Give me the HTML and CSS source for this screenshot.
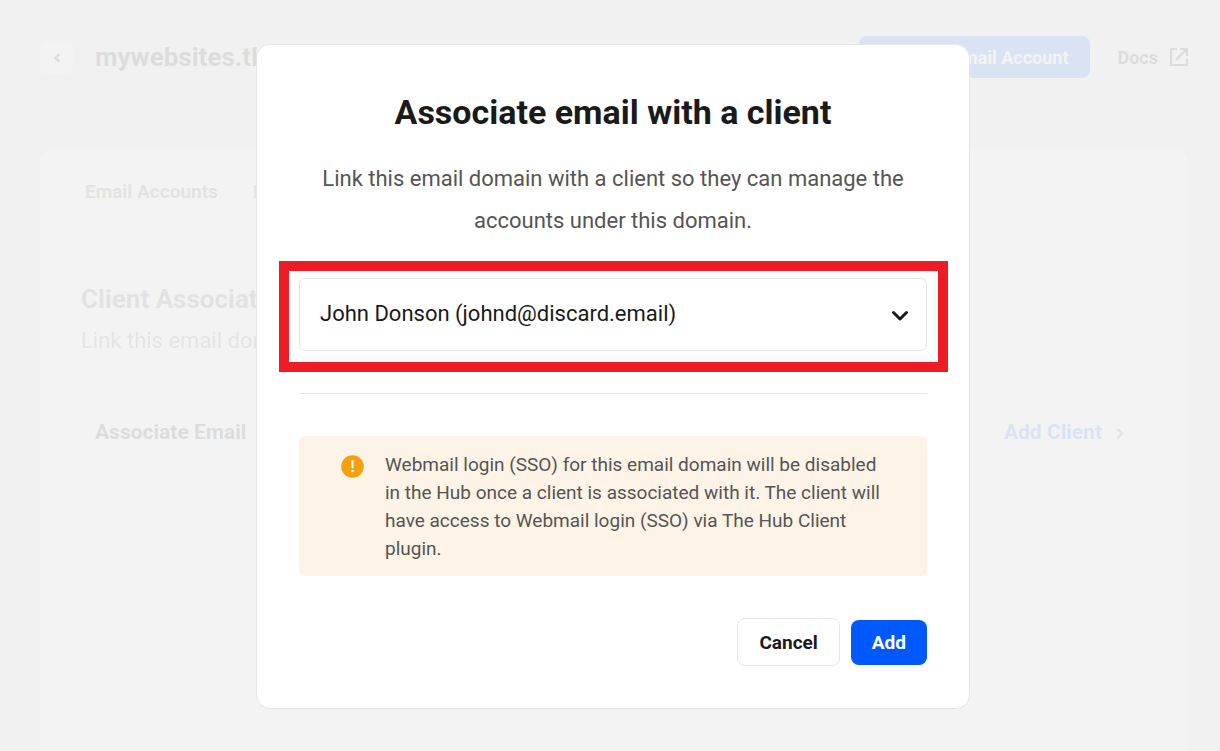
FILE: index.html
```html
<!DOCTYPE html>
<html lang="en">
<head>
<meta charset="utf-8">
<meta name="viewport" content="width=device-width, initial-scale=1">
<title>Associate email with a client</title>
<link rel="stylesheet" href="styles.css">
</head>
<body>
<div class="page">
  <header class="topbar">
    <button class="back" type="button" aria-label="Back">
      <svg width="8" height="10" viewBox="0 0 8 10" fill="none" stroke="currentColor" stroke-width="2.4"><path d="M6.500 1 2.500 5l4 4"/></svg>
    </button>
    <h1 class="domain">mywebsites.tk</h1>
    <button class="btn btn-top" type="button">Add New Email Account</button>
    <a class="docs" href="#docs">Docs
      <svg width="18" height="18" viewBox="0 0 18 18" fill="none" stroke="currentColor" stroke-width="2.2"><path d="M7 1H1v16h16v-6M10 1h7v7M16.500 1.500 6 12"/></svg>
    </a>
  </header>
  <main class="panel">
    <nav class="tabs">
      <a href="#accounts">Email Accounts</a>
      <a href="#filters">Filters</a>
    </nav>
    <h2 class="panel-title">Client Association</h2>
    <p class="panel-text">Link this email domain</p>
    <div class="panel-row">
      <span>Associate Email</span>
      <a class="add-client" href="#add-client">Add Client
        <svg width="8" height="14" viewBox="0 0 8 14" fill="none" stroke="currentColor" stroke-width="2.4"><path d="M1.500 4 6 8.500 1.500 13"/></svg>
      </a>
    </div>
  </main>
</div>

<div class="overlay">
  <form class="dialog" role="dialog" aria-modal="true" aria-labelledby="dialog-title">
    <h2 class="dialog-title" id="dialog-title">Associate email with a client</h2>
    <p class="dialog-text">Link this email domain with a client so they can manage the accounts under this domain.</p>
    <div class="highlight">
      <div class="select-box">
        <select class="select" aria-label="Client">
          <option>John Donson (johnd@discard.email)</option>
        </select>
        <svg class="select-arrow" width="18" height="12" viewBox="0 0 18 12" fill="none" stroke="currentColor" stroke-width="3" stroke-linecap="round" stroke-linejoin="round"><path d="M2.500 2.500 9 9l6.500-6.500"/></svg>
      </div>
    </div>
    <hr class="divider">
    <div class="notice">
      <svg class="notice-icon" width="23" height="23" viewBox="0 0 23 23"><circle cx="11.500" cy="11.500" r="11.200" fill="#f2a20d"/><path d="M10.400 5.200h2.200l-.3 8h-1.600z" fill="#fff"/><circle cx="11.500" cy="16" r="1.300" fill="#fff"/></svg>
      <p>Webmail login (SSO) for this email domain will be disabled in the Hub once a client is associated with it. The client will have access to Webmail login (SSO) via The Hub Client plugin.</p>
    </div>
    <div class="actions">
      <button class="btn btn-cancel" type="button">Cancel</button>
      <button class="btn btn-add" type="submit">Add</button>
    </div>
  </form>
</div>
</body>
</html>
```
FILE: styles.css
```css
* {
  box-sizing: border-box;
}

body {
  margin: 0;
  background: #e8e8e8;
  color: #1a1a1a;
  font-family: Roboto, "Liberation Sans", sans-serif;
}

h1, h2, p {
  margin: 0;
}

a {
  color: inherit;
  text-decoration: none;
}

button, select {
  font: inherit;
  color: inherit;
}

.page {
  display: flex;
  flex-direction: column;
  gap: 71px;
  min-height: 100vh;
  padding: 36px 32px 0 40px;
}

.topbar {
  display: flex;
  align-items: center;
  height: 42px;
}

.back {
  display: grid;
  place-items: center;
  width: 33px;
  height: 33px;
  padding: 2px 0 0;
  border: 0;
  border-radius: 8px;
  background: #fff;
}

.domain {
  margin-left: 22px;
  font-size: 26px;
  line-height: 32px;
}

.btn {
  padding: 0 21px;
  border: 0;
  border-radius: 8px;
  background: #0059ff;
  color: #fff;
  font-size: 19px;
  font-weight: 700;
}

.btn-top {
  height: 42px;
  margin-left: auto;
  padding-left: 16px;
  font-size: 18px;
}

.docs {
  display: flex;
  align-items: center;
  gap: 12px;
  margin-left: 28px;
  font-size: 18px;
  font-weight: 700;
}

.panel {
  flex: 1;
  padding: 32px 41px 0;
  border-radius: 14px 14px 0 0;
  background: #fff;
}

.tabs {
  display: flex;
  gap: 35px;
  margin-left: 4px;
  color: #555;
  font-size: 19px;
  font-weight: 700;
  line-height: 22px;
}

.panel-title {
  margin-top: 79px;
  color: #555;
  font-size: 26px;
  line-height: 34px;
}

.panel-text {
  margin-top: 11px;
  color: #666;
  font-size: 22px;
  line-height: 28px;
}

.panel-row {
  display: flex;
  justify-content: space-between;
  margin-top: 63px;
  padding: 0 23px 0 14px;
  font-size: 21px;
  font-weight: 700;
  line-height: 28px;
}

.add-client {
  display: flex;
  align-items: center;
  gap: 14px;
  color: #0059ff;
}

.add-client svg {
  color: #555;
}

.overlay {
  position: fixed;
  inset: 0;
  display: flex;
  align-items: center;
  justify-content: center;
  padding: 2px 0 0 6px;
  background: rgba(242, 242, 242, 0.9);
}

.dialog {
  width: 100%;
  max-width: 714px;
  padding: 42px;
  border: 1px solid #e6e6e6;
  border-radius: 14px;
  background: #fff;
}

.dialog-title {
  font-size: 34px;
  line-height: 50px;
  text-align: center;
}

.dialog-text {
  margin-top: 21px;
  color: #555;
  font-size: 22px;
  line-height: 42px;
  text-align: center;
}

.highlight {
  margin: 19px -21px 0 -20px;
  padding: 7px 11px 11px 10px;
  border: 10px solid #ee1c25;
}

.select-box {
  position: relative;
}

.select {
  display: block;
  width: 100%;
  height: 73px;
  padding: 0 60px 2px 20px;
  border: 1px solid #e6e6e6;
  border-radius: 6px;
  background: #fff;
  font-size: 22px;
  appearance: none;
}

.select-arrow {
  position: absolute;
  top: 32px;
  right: 18px;
  pointer-events: none;
}

.divider {
  height: 1px;
  margin: 21px 0 42px;
  border: 0;
  background: #e6e6e6;
}

.notice {
  display: flex;
  align-items: flex-start;
  gap: 21px;
  padding: 15px 42px 13px;
  border-radius: 6px;
  background: #fdf3e6;
  color: #555;
  font-size: 19px;
  line-height: 28px;
}

.notice-icon {
  flex: none;
  margin-top: 4px;
}

.actions {
  display: flex;
  align-items: center;
  justify-content: flex-end;
  gap: 11px;
  margin-top: 42px;
}

.btn-add {
  height: 45px;
}

.btn-cancel {
  height: 48px;
  border: 1px solid #e6e6e6;
  background: #fff;
  color: #1a1a1a;
}
```
